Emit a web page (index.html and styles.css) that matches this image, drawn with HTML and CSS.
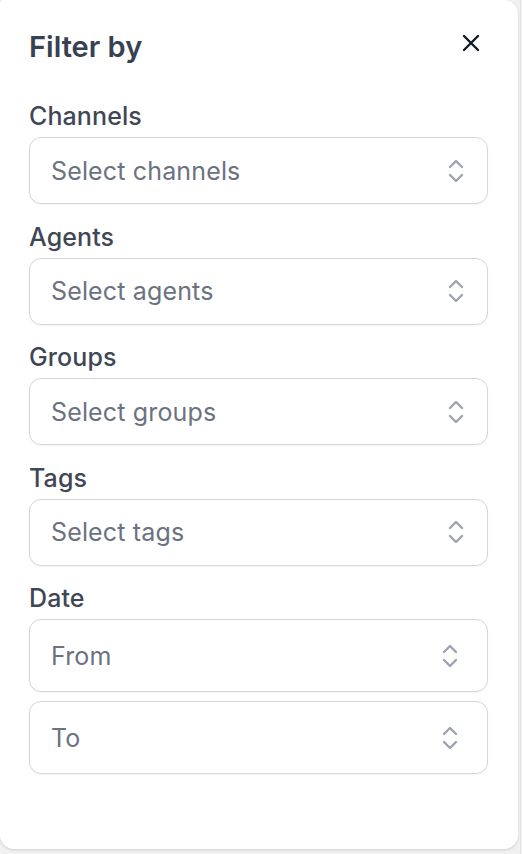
FILE: index.html
```html
<!DOCTYPE html>
<html lang="en">
<head>
    <meta charset="UTF-8">
    <meta name="viewport" content="width=device-width, initial-scale=1.0">
    <title>Filter by</title>
    <link rel="stylesheet" href="styles.css">
</head>
<body>
    <div class="layout">
        <!-- Filter panel -->
        <aside class="filter-panel">
            <div class="panel-header">
                <h2 class="panel-title">Filter by</h2>
                <button type="button" class="close-button" aria-label="Close">
                    <svg width="18" height="18" viewBox="0 0 18 18" fill="none" stroke="currentColor" stroke-width="2.4" stroke-linecap="round">
                        <path d="M2 2L16 16M16 2L2 16"/>
                    </svg>
                </button>
            </div>

            <div class="filter-group">
                <label class="filter-label">Channels</label>
                <div class="select-box">
                    <span class="placeholder">Select channels</span>
                    <svg class="chevrons" width="18" height="26" viewBox="0 0 18 26" fill="none" stroke="currentColor" stroke-width="2.4" stroke-linecap="round" stroke-linejoin="round">
                        <path d="M3 9L9 3L15 9M3 17L9 23L15 17"/>
                    </svg>
                </div>
            </div>

            <div class="filter-group">
                <label class="filter-label">Agents</label>
                <div class="select-box">
                    <span class="placeholder">Select agents</span>
                    <svg class="chevrons" width="18" height="26" viewBox="0 0 18 26" fill="none" stroke="currentColor" stroke-width="2.4" stroke-linecap="round" stroke-linejoin="round">
                        <path d="M3 9L9 3L15 9M3 17L9 23L15 17"/>
                    </svg>
                </div>
            </div>

            <div class="filter-group">
                <label class="filter-label">Groups</label>
                <div class="select-box">
                    <span class="placeholder">Select groups</span>
                    <svg class="chevrons" width="18" height="26" viewBox="0 0 18 26" fill="none" stroke="currentColor" stroke-width="2.4" stroke-linecap="round" stroke-linejoin="round">
                        <path d="M3 9L9 3L15 9M3 17L9 23L15 17"/>
                    </svg>
                </div>
            </div>

            <div class="filter-group">
                <label class="filter-label">Tags</label>
                <div class="select-box">
                    <span class="placeholder">Select tags</span>
                    <svg class="chevrons" width="18" height="26" viewBox="0 0 18 26" fill="none" stroke="currentColor" stroke-width="2.4" stroke-linecap="round" stroke-linejoin="round">
                        <path d="M3 9L9 3L15 9M3 17L9 23L15 17"/>
                    </svg>
                </div>
            </div>

            <div class="filter-group">
                <label class="filter-label">Date</label>
                <div class="date-fields">
                    <div class="select-box date-box">
                        <span class="placeholder">From</span>
                        <svg class="chevrons" width="18" height="26" viewBox="0 0 18 26" fill="none" stroke="currentColor" stroke-width="2.4" stroke-linecap="round" stroke-linejoin="round">
                            <path d="M3 9L9 3L15 9M3 17L9 23L15 17"/>
                        </svg>
                    </div>
                    <div class="select-box date-box">
                        <span class="placeholder">To</span>
                        <svg class="chevrons" width="18" height="26" viewBox="0 0 18 26" fill="none" stroke="currentColor" stroke-width="2.4" stroke-linecap="round" stroke-linejoin="round">
                            <path d="M3 9L9 3L15 9M3 17L9 23L15 17"/>
                        </svg>
                    </div>
                </div>
            </div>
        </aside>
        <div class="page-edge"></div>
    </div>
</body>
</html>
```

FILE: styles.css
```css
/* Page */
body {
    margin: 0;
    background-color: #f1f1f2;
    font-family: 'Inter', 'Noto Sans', sans-serif;
    color: #374151;
}

.layout {
    display: flex;
    height: 854px;
}

.page-edge {
    margin-left: 2px;
    border-left: 1px solid #e2e2e4;
}

/* Panel */
.filter-panel {
    box-sizing: border-box;
    width: 518px;
    height: 849px;
    padding: 29px 30px 0 29px;
    background-color: #ffffff;
    border-radius: 4px 14px 14px 14px;
    box-shadow: 0 1px 3px rgba(0, 0, 0, 0.14);
    display: flex;
    flex-direction: column;
    gap: 14.5px;
}

.panel-header {
    display: flex;
    justify-content: space-between;
    align-items: flex-start;
    margin-bottom: 18.5px;
}

.panel-title {
    margin: 0;
    font-size: 29px;
    line-height: 36px;
    font-weight: 600;
    color: #374151;
}

.close-button {
    background: none;
    border: none;
    padding: 0;
    margin: 5px 8px 0 0;
    color: #111827;
    cursor: pointer;
    display: flex;
}

/* Groups */
.filter-group {
    display: flex;
    flex-direction: column;
}

.filter-label {
    font-size: 25px;
    line-height: 36px;
    font-weight: 500;
    letter-spacing: 0.1px;
    color: #3f4756;
    margin-bottom: 3px;
}

.select-box {
    box-sizing: border-box;
    height: 67px;
    border: 1px solid #d4d6dc;
    border-radius: 12px;
    padding: 0 22px 0 21px;
    display: flex;
    align-items: center;
    justify-content: space-between;
    box-shadow: 0 1px 2px rgba(0, 0, 0, 0.05);
}

.placeholder {
    font-size: 25px;
    letter-spacing: 0.15px;
    color: #6b7280;
}

.chevrons {
    color: #9ca3af;
}

.date-fields {
    display: flex;
    flex-direction: column;
    gap: 9px;
}

.date-box {
    height: 73px;
    padding-right: 28px;
}
```
